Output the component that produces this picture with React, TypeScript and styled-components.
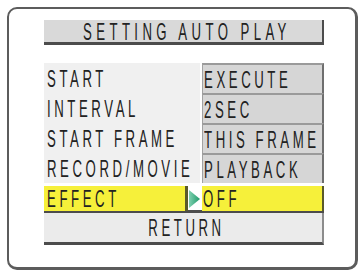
import React from "react";
import styled, { createGlobalStyle } from "styled-components";

const Global = createGlobalStyle`
  html, body { margin: 0; padding: 0; background: #ffffff; }
  * { box-sizing: border-box; }
`;

const Frame = styled.div`
  margin: 7px 0 0 7px;
  width: 351px;
  height: 263px;
  border: 2px solid #5c5c5c;
  border-right-width: 3px;
  border-bottom-width: 3px;
  border-radius: 10px;
  padding: 11px 0 0 35px;
  background: #ffffff;
`;

const Column = styled.div`
  width: 280px;
  display: flex;
  flex-direction: column;
`;

const TitleBar = styled.div`
  height: 25px;
  background: #d9d9d9;
  border-bottom: 3px solid #4c4c4c;
  border-right: 2px solid #4c4c4c;
  display: flex;
  align-items: center;
  justify-content: center;
  margin-bottom: 18px;
`;

const Caption = styled.span<{ $center?: boolean; $spacing?: number }>`
  display: inline-block;
  white-space: nowrap;
  font-family: "Liberation Sans", Arial, sans-serif;
  font-size: 24px;
  line-height: 1;
  letter-spacing: ${(p) => p.$spacing ?? 6.5}px;
  color: #222222;
  transform: scaleX(0.55);
  transform-origin: ${(p) => (p.$center ? "center" : "left")} center;
  margin-right: ${(p) => (p.$center ? `-${p.$spacing ?? 6.5}px` : "0")};
  margin-top: 1px;
  flex-shrink: 0;
`;

const Menu = styled.div`
  display: flex;
  flex-direction: column;
`;

const Row = styled.div<{ $selected?: boolean }>`
  display: grid;
  grid-template-columns: 156px 122px;
  column-gap: 2px;
  height: 30px;
  ${(p) =>
    p.$selected &&
    `
    padding-top: 3px;
    border-bottom: 3px solid #4c4c4c;
  `}
`;

const Label = styled.div<{ $selected?: boolean }>`
  display: flex;
  align-items: center;
  background: ${(p) => (p.$selected ? "transparent" : "#f0f0f0")};
  padding-left: ${(p) => (p.$selected ? "0" : "3px")};
  overflow: visible;
`;

const Highlight = styled.div`
  flex: 0 0 144px;
  height: 100%;
  background: #f6f03a;
  border-right: 3px solid #5a5a2a;
  padding-left: 3px;
  display: flex;
  align-items: center;
`;

const Pointer = styled.svg`
  flex: 0 0 auto;
  margin-left: 1px;
`;

const Value = styled.div<{ $selected?: boolean }>`
  display: flex;
  align-items: center;
  padding-left: 1px;
  background: ${(p) => (p.$selected ? "#f6f03a" : "#d6d6d6")};
  border-top: ${(p) => (p.$selected ? "0" : "2px solid #9a9a9a")};
  border-left: ${(p) => (p.$selected ? "0" : "1px solid #a2a2a2")};
  border-right: 2px solid ${(p) => (p.$selected ? "#5a5a2a" : "#6e6e6e")};
`;

const ReturnRow = styled.div`
  height: 32px;
  background: #ebebeb;
  border-bottom: 3px solid #4c4c4c;
  border-right: 2px solid #8c8c8c;
  display: flex;
  align-items: center;
  justify-content: center;
`;

const items = [
  { label: "START", value: "EXECUTE" },
  { label: "INTERVAL", value: "2SEC" },
  { label: "START FRAME", value: "THIS FRAME" },
  { label: "RECORD/MOVIE", value: "PLAYBACK" },
  { label: "EFFECT", value: "OFF", selected: true },
];

export default function App() {
  return (
    <>
      <Global />
      <Frame>
        <Column>
          <TitleBar>
            <Caption $center $spacing={8}>
              SETTING AUTO PLAY
            </Caption>
          </TitleBar>
          <Menu>
            {items.map((it) => (
              <Row key={it.label} $selected={it.selected}>
                <Label $selected={it.selected}>
                  {it.selected ? (
                    <>
                      <Highlight>
                        <Caption>{it.label}</Caption>
                      </Highlight>
                      <Pointer width="11" height="18" viewBox="0 0 11 18">
                        <defs>
                          <linearGradient id="pg" x1="0" y1="0" x2="1" y2="0">
                            <stop offset="0" stopColor="#7fd0b0" />
                            <stop offset="1" stopColor="#1f9a6a" />
                          </linearGradient>
                        </defs>
                        <polygon points="0,0 11,9 0,18" fill="url(#pg)" />
                      </Pointer>
                    </>
                  ) : (
                    <Caption>{it.label}</Caption>
                  )}
                </Label>
                <Value $selected={it.selected}>
                  <Caption>{it.value}</Caption>
                </Value>
              </Row>
            ))}
            <ReturnRow>
              <Caption $center>RETURN</Caption>
            </ReturnRow>
          </Menu>
        </Column>
      </Frame>
    </>
  );
}
